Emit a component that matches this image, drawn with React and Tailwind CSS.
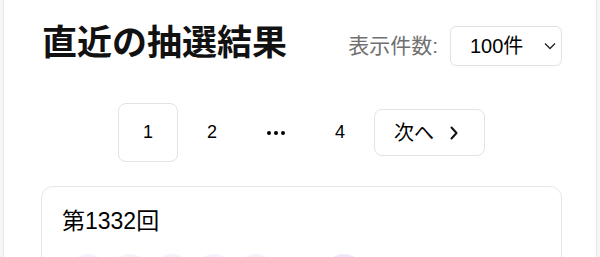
import React from "react";

const font = { fontFamily: '"Liberation Sans", "Noto Sans CJK JP", sans-serif' };

export default function App() {
  const balls = [0, 1, 2, 3, 4];
  return (
    <div className="min-h-screen bg-[#f6f5f8] px-[3px]" style={font}>
      <div className="bg-white border-x border-[#e8e6ec] pl-[37px] pr-[34px] pt-[22px] h-[257px] overflow-hidden">
        <div className="flex justify-between items-start">
          <h1 className="text-[35px] font-bold leading-none text-[#111] ml-[1px]" style={{ fontFamily: '"Noto Sans CJK JP", sans-serif' }}>
            直近の抽選結果
          </h1>
          <div className="flex items-center gap-[12px] mt-[4px]">
            <span className="text-[21px] text-[#707070]">表示件数:</span>
            <div className="w-[112px] h-[40px] border border-[#e2e2e2] rounded-[6px] flex items-center justify-between pl-[19px] pr-[5px]">
              <span className="text-[20px] text-black">100件</span>
              <svg width="12" height="8" viewBox="0 0 12 8" fill="none" stroke="#222" strokeWidth="1.3">
                <path d="M1 1.5 L6 6.5 L11 1.5" />
              </svg>
            </div>
          </div>
        </div>

        <div className="mt-[37px] flex justify-center items-center gap-[4px]">
          <div className="w-[60px] h-[59px] border border-[#e3e3e3] rounded-[8px] flex items-center justify-center text-[18px] text-black">1</div>
          <div className="w-[60px] h-[59px] flex items-center justify-center text-[18px] text-black">2</div>
          <div className="w-[60px] h-[59px] flex items-center justify-center gap-[3px]">
            <span className="w-[4px] h-[4px] rounded-full bg-black" />
            <span className="w-[4px] h-[4px] rounded-full bg-black" />
            <span className="w-[4px] h-[4px] rounded-full bg-black" />
          </div>
          <div className="w-[60px] h-[59px] flex items-center justify-center text-[18px] text-black">4</div>
          <div className="h-[47px] border border-[#e3e3e3] rounded-[8px] flex items-center pl-[19px] pr-[26px] gap-[16px] text-[20px] text-black">
            <span>次へ</span>
            <svg width="8" height="14" viewBox="0 0 8 14" fill="none" stroke="#111" strokeWidth="2" strokeLinecap="round" strokeLinejoin="round">
              <path d="M1.5 1.5 L6.5 7 L1.5 12.5" />
            </svg>
          </div>
        </div>

        <div className="mt-[24px] border border-[#e8e6ec] rounded-[12px] px-[20px] pt-[23px] pb-[20px]">
          <div className="text-[23px] leading-none text-black">第1332回</div>
          <div className="mt-[21px] flex items-center gap-[4px] pl-[7px]">
            {balls.map((b) => (
              <div key={b} className="w-[38px] h-[38px] rounded-full bg-[#f6f2fd]" />
            ))}
            <div className="w-[38px] h-[38px] ml-[46px] rounded-full bg-[#efe6fc]" />
          </div>
        </div>
      </div>
    </div>
  );
}
